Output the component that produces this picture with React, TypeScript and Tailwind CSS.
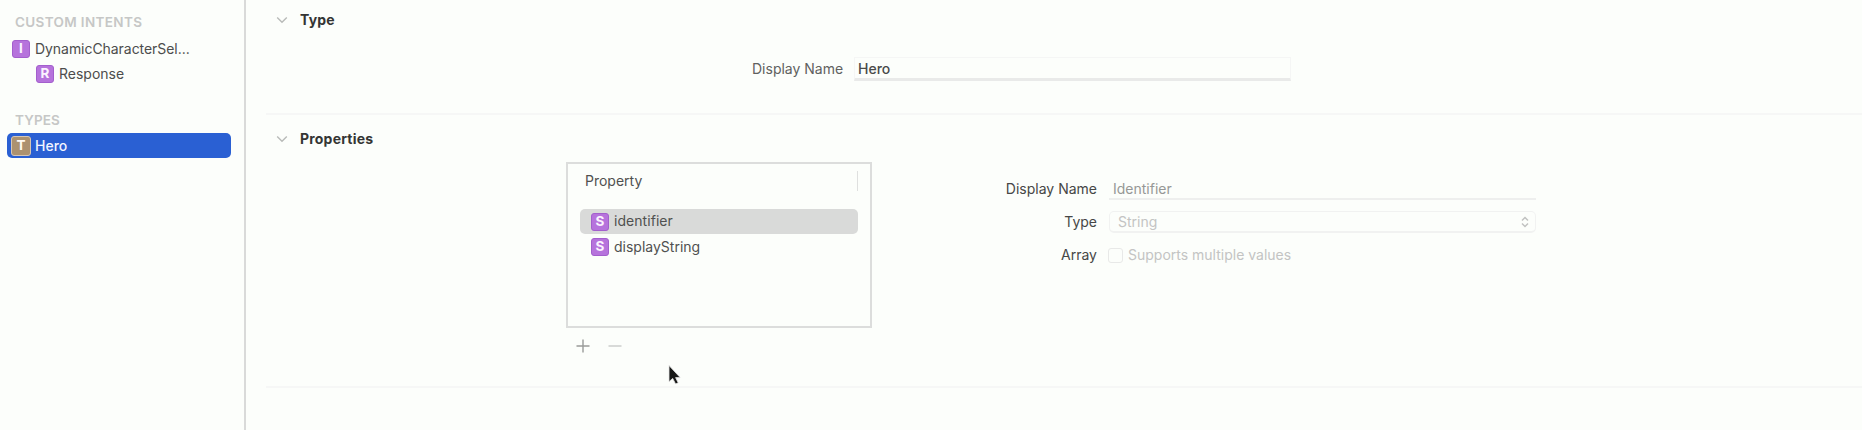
import React from "react";

const PURPLE = "size-[18px] border-[#a35fcd] bg-[#b673dc] text-[#fbf2ff]";
const TAN = "size-5 border-[#d5c6b5] bg-[#ac9270] text-[#fffaf2]";

function Badge({ letter, tone = PURPLE }: { letter: string; tone?: string }) {
  return (
    <span
      className={`flex shrink-0 items-center justify-center rounded-[3px] border text-[13.5px] leading-none font-bold ${tone}`}
    >
      {letter}
    </span>
  );
}

function SectionHeader({ title }: { title: string }) {
  return (
    <div className="flex h-5 items-center pl-[10px]">
      <svg width="12" height="8" viewBox="0 0 12 8" fill="none" stroke="#b9bbb9" strokeWidth="1.4">
        <path d="M1.2 1.4 6 6.2l4.8-4.8" />
      </svg>
      <h2 className="ml-3 text-[14px] font-bold tracking-[0.2px] text-[#343534]">{title}</h2>
    </div>
  );
}

function Sidebar() {
  return (
    <aside className="h-full w-[246px] shrink-0 border-r-2 border-[#d9dad9] pt-3 text-[14px] text-[#4c4d4c]">
      <h3 className="ml-[15px] h-5 text-[13.5px] leading-5 font-semibold tracking-[0.35px] text-[#c6c7c6]">CUSTOM INTENTS</h3>
      <div className="mt-[5px] ml-3 flex h-6 items-center gap-[5px]">
        <Badge letter="I" />
        <span className="tracking-[-0.05px]">DynamicCharacterSel...</span>
      </div>
      <div className="mt-px ml-9 flex h-6 items-center gap-[5px]">
        <Badge letter="R" />
        <span>Response</span>
      </div>
      <h3 className="mt-6 ml-[15px] h-5 text-[13.5px] leading-5 font-semibold tracking-[0.1px] text-[#c6c7c6]">TYPES</h3>
      <div className="mt-[3px] ml-[7px] flex h-[25px] w-[224px] items-center gap-[4px] rounded-[5px] bg-[#2a60d3] pl-1 text-[#f1f5ff]">
        <Badge letter="T" tone={TAN} />
        <span className="pt-px font-medium">Hero</span>
      </div>
    </aside>
  );
}

function PropertyTable() {
  return (
    <div className="w-[306px]">
      <div className="h-[166px] border-2 border-[#dcdddc] px-[12px] pt-[7px] text-[#505150]">
        <div className="flex h-5 items-center border-r border-[#dfe0df] pl-[5px]">Property</div>
        <div className="mt-[18px] flex h-[25px] items-center gap-[5px] rounded-[5px] bg-[#d9dad9] pl-[11px]">
          <Badge letter="S" />
          <span className="pb-px tracking-[0.05px]">identifier</span>
        </div>
        <div className="flex h-[26px] items-center gap-[5px] pl-[11px]">
          <Badge letter="S" />
          <span>displayString</span>
        </div>
      </div>
      <div className="mt-[11px] flex items-center gap-[18px] pl-[10px]">
        <svg width="14" height="14" viewBox="0 0 14 14" stroke="#999b99" strokeWidth="1.4">
          <path d="M7 .5v13M.5 7h13" />
        </svg>
        <svg width="14" height="14" viewBox="0 0 14 14" stroke="#c9cac9" strokeWidth="1.4">
          <path d="M.5 7h13" />
        </svg>
      </div>
    </div>
  );
}

function PropertyForm() {
  return (
    <div className="mt-[13px] ml-[125px] grid w-[539px] grid-cols-[100px_427px] content-start gap-x-3 whitespace-nowrap text-[#464746]">
      <span className="h-[27px] text-right leading-[27px]">Display Name</span>
      <div className="h-[25px] border-b-2 border-[#eeefee] pl-1 leading-[27px] text-[#969896]">Identifier</div>
      <span className="mt-[8px] h-6 text-right leading-6">Type</span>
      <div className="mt-[9px] flex h-[22px] items-center justify-between rounded-[5px] border border-b-2 border-[#f1f2f1] pr-[6px] pl-2 text-[#c3c4c3]">
        <span>String</span>
        <svg width="8" height="12" viewBox="0 0 8 12" fill="none" stroke="#c1c2c1" strokeWidth="1.5">
          <path d="m1 4.5 3-3 3 3M1 7.5l3 3 3-3" />
        </svg>
      </div>
      <span className="mt-[9px] h-6 text-right leading-6">Array</span>
      <div className="mt-[9px] -ml-px flex h-6 items-center gap-[5px] text-[#c3c4c3]">
        <span className="size-[15px] rounded-[3px] border border-[#e8e9e8]" />
        <span>Supports multiple values</span>
      </div>
    </div>
  );
}

export default function App() {
  return (
    <div className="relative flex h-[430px] w-[1862px] overflow-hidden bg-[#fcfefb] font-[Inter,sans-serif] text-[14px] leading-5">
      <Sidebar />
      <main className="min-w-0 flex-1 pl-5">
        <section className="h-[115px] border-b-2 border-[#f6f7f6] pt-[10px]">
          <SectionHeader title="Type" />
          <div className="mt-[27px] ml-[486px] flex h-6 items-center whitespace-nowrap">
            <span className="w-[91px] text-[#606160]">Display Name</span>
            <div className="ml-[11px] h-6 w-[437px] border border-b-[3px] border-[#f5f6f5] border-b-[#e9eae9] pl-[3px] leading-[21px] font-medium text-[#4a4b4a]">
              Hero
            </div>
          </div>
        </section>
        <section className="h-[273px] border-b-2 border-[#f6f7f6] pt-[14px]">
          <SectionHeader title="Properties" />
          <div className="mt-[13px] flex pl-[300px]">
            <PropertyTable />
            <PropertyForm />
          </div>
        </section>
      </main>
      <svg className="absolute top-[364px] left-[667px]" width="16" height="24" viewBox="0 0 16 24">
        <path d="M2 1.5v16.2l3.7-3.3 2.9 5.6 2.6-1.2-2.6-5.2h4.6z" fill="#171817" stroke="#e4e5e4" strokeWidth="0.8" />
      </svg>
    </div>
  );
}
